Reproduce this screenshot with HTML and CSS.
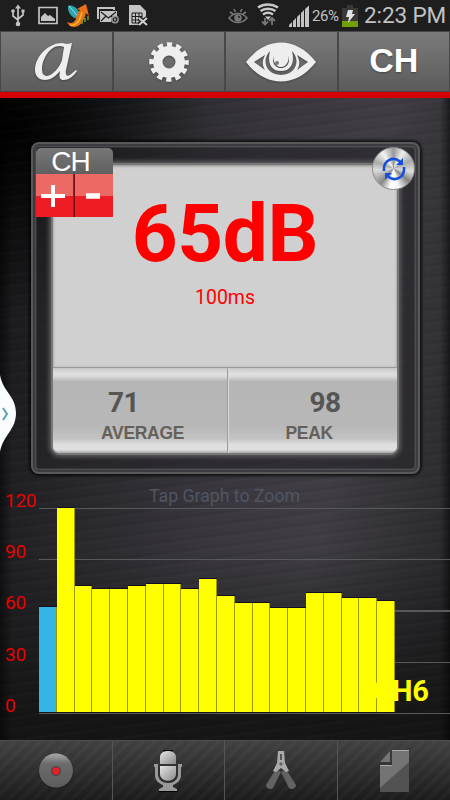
FILE: index.html
```html
<!DOCTYPE html>
<html lang="en">
<head>
    <meta charset="UTF-8">
    <meta name="viewport" content="width=device-width, initial-scale=1.0">
    <title>Sound Meter</title>
    <link rel="stylesheet" href="styles.css">
</head>
<body>
<div class="screen">
    <header class="status">
        <svg class="status-icons" width="152" height="31" viewBox="0 0 152 31">
            <g fill="none" stroke="#c4c4c4" stroke-width="1.7">
                <path d="M18 7v17M13 12v4l5 4M23 12v3l-5 4"/>
                <path d="M39 7.5h18v16H39z"/>
            </g>
            <g fill="#c4c4c4">
                <path d="M18 4.5l3 4h-6z"/><circle cx="18" cy="24" r="2.3"/><circle cx="13" cy="11" r="1.8"/><path d="M21.500 9.500h3v3h-3z"/>
                <path d="M41 21v-4l4-4 3 3 2-1 5 4v2z"/>
                <path d="M97 7h18v3h-2V9H99v10h-2z"/>
                <path d="M100 11h17v6a5 5 0 0 0-6 5h-11z"/>
                <path d="M129 5h11l6 6v6l-4 2v6h-13z"/>
            </g>
            <path d="M101 12l7.500 6 7.500-6M101 21l5-5M111 16l2 2" fill="none" stroke="#1e1e1e" stroke-width="1.200"/>
            <circle cx="115" cy="19.500" r="3.200" fill="none" stroke="#999" stroke-width="1.400"/><circle cx="115" cy="19.500" r="1.200" fill="#999"/>
            <path d="M132 13h10v10h-10zM132 16.500h10M132 20h10M135.500 13v10M139 13v10" fill="none" stroke="#1e1e1e"/>
            <path d="M139 18l8 7M147 18l-8 7" stroke="#1e1e1e" stroke-width="4"/>
            <path d="M139 18l8 7M147 18l-8 7" stroke="#d0d0d0" stroke-width="2"/>
            <path d="M68 6c5-2 12 3 13 13-8 1-14-6-13-13z" fill="#2aa5ae"/>
            <path d="M69 6l11 13" stroke="#9fe0df"/>
            <path d="M67 22c4 2 7 1 9-3 0-4 2-7 4-9l-3-1 9-5 3 12-3-3c-2 8-6 14-12 14-3 0-6-2-7-5z" fill="#e7711b"/>
            <path d="M70 25c6 1 10-4 12-13" fill="none" stroke="#f6b331" stroke-width="1.500"/>
            <path d="M82 20v4M85 18v4M88 16v4" stroke="#6e9a28" stroke-width="1.500"/>
        </svg>
        <div class="status-right">
            <svg width="86" height="31" viewBox="0 0 86 31">
                <g fill="none" stroke="#777" stroke-width="1.600">
                    <path d="M1 18c5-6 13-6 18 0-5 6-13 6-18 0zM2 12l3 2M6 9l1.500 3M14 9l-1.500 3M18 12l-3 2"/>
                </g>
                <circle cx="10" cy="18" r="3.700" fill="#777"/><circle cx="11" cy="17" r="1" fill="#1e1e1e"/>
                <g fill="none" stroke="#c8c8c8" stroke-width="2.500">
                    <path d="M30 7.500c6-4 14-4 20 0M32.500 11c4-3 11-3 15 0M35 14.500c3-2 7-2 10 0"/>
                </g>
                <path d="M37 16.500h6L40 20z" fill="#c8c8c8"/>
                <path d="M37 18v6M34 21.500l3 3 3-3M44 25v-6M41 21l3-3 3 3" fill="none" stroke="#777" stroke-width="1.800"/>
                <path d="M61 27v-2l3-3v5zM65 27v-6l3-3v9zM69 27V17l3-3v13zM73 27V13l3-3v17zM77 27V9l4-3.500V27z" fill="#c4c4c4"/>
            </svg>
            <span class="percent">26%</span>
            <svg width="16" height="31" viewBox="0 0 16 31">
                <path d="M5 5h6v3h5v19H0V8h5z" fill="#383838"/>
                <path d="M0 21h16v6H0z" fill="#72a000"/>
                <path d="M6 10h5l-1 4h3l-7 9 1-6H4z" fill="#e2e2e2"/>
            </svg>
            <span class="clock">2:23 PM</span>
        </div>
    </header>

    <nav class="toolbar">
        <div class="tool">
            <svg width="44" height="40" viewBox="0 0 44 40">
                <path fill-rule="evenodd" d="M38 1L32 28c-1 5 1 7 4 5l6-5 1 1c-4 6-9 9-13 9-5 0-5-4-4-9-5 6-10 9-15 9-6 0-10-4-10-10C1 14 15 1 28 1l5 1zM30 5C18 0 8 16 8 27c0 5 2 7 5 7 5 0 13-9 15-16z"/>
            </svg>
        </div>
        <div class="tool">
            <svg width="40" height="40" viewBox="-20 -20 40 40">
                <circle r="11.200" fill="none" stroke="#eee" stroke-width="9.400"/>
                <circle r="17.300" fill="none" stroke="#eee" stroke-width="5" stroke-dasharray="5.200 3.858" stroke-dashoffset="2.600"/>
            </svg>
        </div>
        <div class="tool">
            <svg width="70" height="40" viewBox="0 0 70 40">
                <path fill-rule="evenodd" d="M0 20C20-6 50-6 70 20 50 46 20 46 0 20zM8 20l11 8c-3-5-3-9 0-15zM62 20l-11 8c3-5 3-9 0-15zM24 9c-9 9-4 24 11 24S55 18 46 9c3 12-1 20-11 20S21 21 24 9zM30 11c-6 7-2 15 5 15s11-8 5-15c2 3 1 6-1 7-3 3-9-1-9-7z"/>
                <path d="M29 9c4-5 8-5 12 0 4 8 0 16-6 16s-10-8-6-16z"/>
                <circle cx="31" cy="21" r="2" fill="#777"/>
            </svg>
        </div>
        <div class="tool tool-text">CH</div>
    </nav>

    <main class="panel">
        <section class="meter">
            <div class="display">
                <div class="reading">
                    <div class="level">65dB</div>
                    <div class="interval">100ms</div>
                </div>
                <div class="stats">
                    <div class="stat average">
                        <div class="stat-value">71</div>
                        <div class="stat-label">AVERAGE</div>
                    </div>
                    <div class="stat peak">
                        <div class="stat-value">98</div>
                        <div class="stat-label">PEAK</div>
                    </div>
                </div>
            </div>
            <div class="channel">
                <div class="channel-title">CH</div>
                <div class="channel-buttons">
                    <div class="step"><svg width="24" height="24"><path d="M12 1v22M0 12h24" stroke="#fff" stroke-width="4"/></svg></div>
                    <div class="step"><svg width="14" height="24"><path d="M0 12h14" stroke="#fff" stroke-width="5.500"/></svg></div>
                </div>
            </div>
            <div class="refresh">
                <svg width="24" height="24" viewBox="0 0 24 24">
                    <g fill="none" stroke="#1450dc" stroke-width="2.600">
                        <path d="M2 14C1 3 11-1 18 4.500M22 10c1 11-9 15-16 9.500"/>
                    </g>
                    <path d="M21 1v7h-7zM3 23v-7h7z" fill="#1450dc"/>
                </svg>
            </div>
        </section>

        <svg class="drawer" width="17" height="84" viewBox="0 0 17 84">
            <path d="M0 3C3 20 16 24 16 41S3 63 0 80z" fill="#fafdfd"/>
            <path d="M3 36l4 6-4 6" fill="none" stroke="#5b9fba" stroke-width="2"/>
        </svg>

        <p class="hint">Tap Graph to Zoom</p>
        <section class="chart">
            <div class="axis">
                <span>120</span><span>90</span><span>60</span><span>30</span><span>0</span>
            </div>
            <div class="plot">
                <div class="bar current" style="height: 105.500px"></div>
                <div class="bar" style="height: 204.500px"></div>
                <div class="bar" style="height: 126px"></div>
                <div class="bar" style="height: 123px"></div>
                <div class="bar" style="height: 123px"></div>
                <div class="bar" style="height: 126px"></div>
                <div class="bar" style="height: 128px"></div>
                <div class="bar" style="height: 128px"></div>
                <div class="bar" style="height: 123px"></div>
                <div class="bar" style="height: 133px"></div>
                <div class="bar" style="height: 116px"></div>
                <div class="bar" style="height: 109.500px"></div>
                <div class="bar" style="height: 109.500px"></div>
                <div class="bar" style="height: 104.500px"></div>
                <div class="bar" style="height: 104.500px"></div>
                <div class="bar" style="height: 119.500px"></div>
                <div class="bar" style="height: 119.500px"></div>
                <div class="bar" style="height: 114.500px"></div>
                <div class="bar" style="height: 114.500px"></div>
                <div class="bar" style="height: 111px"></div>
                <span class="series">CH6</span>
            </div>
        </section>
    </main>

    <footer class="tabs">
        <div class="tab">
            <svg width="38" height="42" viewBox="0 0 38 42">
                <defs>
                    <linearGradient id="metal" x2="0" y2="1"><stop stop-color="#aaa"/><stop offset=".3" stop-color="#6b6b6b"/><stop offset="1" stop-color="#5d5d5d"/></linearGradient>
                    <linearGradient id="silver" x2="1" y2="1"><stop stop-color="#e6e6e6"/><stop offset="1" stop-color="#888"/></linearGradient>
                </defs>
                <circle cx="19" cy="21.500" r="17.500" fill="#202020"/>
                <circle cx="19" cy="20.500" r="17" fill="url(#metal)"/>
                <circle cx="19" cy="21" r="5" fill="#444"/><circle cx="19" cy="21" r="3.800" fill="#e32028"/>
            </svg>
        </div>
        <div class="tab">
            <svg width="30" height="42" viewBox="0 0 30 42">
                <path d="M7 14V7c0-8 16-8 16 0v7z" fill="url(#silver)"/>
                <path d="M7 16h16v8c0 9-16 9-16 0z" fill="url(#silver)"/>
                <path d="M1 14h4v10c0 12 20 12 20 0V14h4v3h-1v8c0 5-3 8-8 10v2l4 2v2H6v-2l4-2v-2c-5-2-8-5-8-10v-8H1z" fill="#999"/>
                <path d="M6 41.500h18M10 .5h10" fill="none" stroke="#050505"/>
            </svg>
        </div>
        <div class="tab">
            <svg width="34" height="42" viewBox="0 0 34 42">
                <path d="M12 19l5 3-8 16c-2 2-7 1-7-3zM22 19l-5 3 8 16c2 2 7 1 7-3z" fill="#626262"/>
                <path d="M14 1h6l1 12 4 8-3 1-5-4-5 4-3-1 4-8z" fill="#aaa"/>
                <path d="M17 4v6" stroke="#555" stroke-width="2"/><circle cx="17" cy="14" r="1.700" fill="#666"/>
            </svg>
        </div>
        <div class="tab">
            <svg width="30" height="42" viewBox="0 0 30 42">
                <path d="M13 0h17v42H1V15h12z" fill="#525252"/>
                <path d="M13 0h17v12L1 38V15h12z" fill="#747474"/>
                <path d="M11 1v11H1z" fill="#747474"/>
                <path d="M13 .5h17M1 15.500h12" stroke="#aaa"/>
            </svg>
        </div>
    </footer>
</div>
</body>
</html>
```
FILE: styles.css
```css
* {
    box-sizing: border-box;
}

body {
    margin: 0;
    font-family: Roboto, sans-serif;
    background: #000;
}

svg {
    display: block;
}

.screen {
    width: 450px;
    height: 800px;
    display: flex;
    flex-direction: column;
    overflow: hidden;
}

.status {
    height: 31px;
    display: flex;
    justify-content: space-between;
    background: #1e1e1e;
    color: #c2c2c2;
}

.status-right {
    display: flex;
    width: 222px;
}

.percent {
    width: 29px;
    margin-right: 1px;
    margin-left: -2px;
    font-size: 15px;
    line-height: 32px;
    letter-spacing: -0.4px;
}

.clock {
    margin-left: 6px;
    font-size: 22.5px;
    line-height: 31px;
    letter-spacing: -0.1px;
    white-space: nowrap;
}

.toolbar {
    height: 61px;
    display: grid;
    grid-template-columns: repeat(4, 1fr);
    background: #484848;
}

.tool {
    display: flex;
    align-items: center;
    justify-content: center;
    margin: 1px;
    background: linear-gradient(#7b7b7b, #5b5b5b);
}

.tool svg {
    fill: #eee;
    filter: drop-shadow(0 1px 1px #444);
}

.tool-text {
    color: #fff;
    font: bold 34px "Liberation Sans", sans-serif;
    text-shadow: 0 1px 2px #444;
    padding-bottom: 2px;
}

.panel {
    position: relative;
    height: 648px;
    padding: 44px 0 0 31px;
    border-top: 6px solid #d50000;
    background:
        linear-gradient(to right, rgba(0, 0, 0, 0.5), transparent 12px, transparent 440px, rgba(0, 0, 0, 0.5)),
        repeating-linear-gradient(173deg, rgba(255, 255, 255, 0.012) 0 2px, transparent 3px 7px, rgba(0, 0, 0, 0.07) 9px, transparent 11px),
        linear-gradient(to bottom, transparent 70%, rgba(20, 20, 20, 0.95) 97%),
        radial-gradient(ellipse 210px 190px at 0 30px, #000, transparent),
        linear-gradient(100deg, #151517 0%, #242327 20%, #39373d 50%, #403e44 70%, #252427 100%);
}

.meter {
    position: relative;
    width: 389px;
    height: 332px;
    padding: 19px 19px 17px 18px;
    border: 2px solid #59595b;
    border-radius: 8px;
    background: rgba(38, 36, 42, 0.6);
    box-shadow: inset 0 0 0 2px #3c3b3f, inset 0 0 2px 3px #5d5c5f, 0 0 3px 2px rgba(0, 0, 0, 0.7);
}

.display {
    height: 292px;
    border: 2px solid #777;
    border-radius: 4px 4px 9px 9px;
    background: #d0d0d0;
    overflow: hidden;
    box-shadow: 0 0 4px 2px #5c5b5e;
}

.reading {
    height: 202px;
    color: #f00;
    text-align: center;
    box-shadow: inset 0 1px 3px #888;
}

.level {
    padding-top: 22px;
    font-size: 80px;
    font-weight: bold;
    line-height: 94px;
    letter-spacing: -0.4px;
}

.interval {
    padding-top: 5px;
    font-size: 19.5px;
    line-height: 24px;
}

.stats {
    height: 86px;
    display: flex;
    border-top: 1px solid #999;
    background: linear-gradient(#c8c8c8, #e0e0e0 7%, #d8d8d8 10%, #b5b5b5 16%, #b8b8b8 70%, #c3c3c3 83%, #dedede 90%, #e0e0e0 96%, #aaa);
}

.stat {
    padding-top: 19px;
}

.average {
    padding-left: 55px;
    width: 176px;
    border-right: 1px solid #999;
}

.peak {
    padding-left: 56px;
    width: 169px;
    border-left: 1px solid #ddd;
}

.stat-value {
    width: 32px;
    color: #555;
    font-size: 28px;
    font-weight: bold;
    line-height: 31px;
    letter-spacing: -0.6px;
}

.peak .stat-value {
    margin-left: 24px;
}

.stat-label {
    margin-left: -7px;
    padding-top: 4px;
    color: #65615a;
    font: bold 17.5px/22px "Liberation Sans", sans-serif;
    letter-spacing: -0.3px;
}

.peak .stat-label {
    margin-left: 0;
}

.channel {
    position: absolute;
    left: 3px;
    top: 4px;
    width: 77px;
    height: 69px;
    border-radius: 5px 5px 0 0;
    background: linear-gradient(#777, #606060 26px);
}

.channel-title {
    height: 26px;
    padding-right: 8px;
    color: #fff;
    font: 28px/27px "Liberation Sans", sans-serif;
    letter-spacing: -1px;
    text-align: center;
}

.channel-buttons {
    display: grid;
    grid-template-columns: 38px 38px;
    gap: 1px;
    height: 43px;
    background: #751418;
}

.step {
    display: flex;
    align-items: center;
    justify-content: center;
    background: linear-gradient(#ed6a64 22px, #ee1c25 22px);
}

.step:first-child {
    padding-right: 4px;
    border-right: 1px solid #8e2023;
}

.step:last-child {
    padding-right: 2px;
}

.refresh {
    position: absolute;
    right: 3px;
    top: 3px;
    width: 43px;
    height: 43px;
    display: flex;
    align-items: center;
    justify-content: center;
    border: 1px solid #8c8c8c;
    border-radius: 50%;
    background: conic-gradient(#999, #eee 30deg, #aaa 65deg, #ddd 100deg, #858585 130deg, #f5f5f5 165deg, #fff 190deg, #888 220deg, #ddd 265deg, #aaa 290deg, #f4f4f4 325deg, #999);
}

.drawer {
    position: absolute;
    left: 0;
    top: 274px;
}

.hint {
    height: 24px;
    margin: 10px 31px 0 0;
    padding-right: 1px;
    color: #505563;
    font-size: 17.7px;
    line-height: 25px;
    text-align: center;
}

.chart {
    display: flex;
    height: 206px;
    margin-left: -31px;
}

.axis {
    width: 39px;
    margin-top: -19px;
    padding-left: 5px;
    display: flex;
    flex-direction: column;
    color: #e80000;
    font-size: 19px;
}

.axis span {
    height: 51.2px;
    flex: none;
    line-height: 24px;
    letter-spacing: -0.3px;
}

.plot {
    position: relative;
    width: 411px;
    height: 206px;
    display: flex;
    align-items: flex-end;
    padding-bottom: 1px;
    background: repeating-linear-gradient(#565859 0 1.2px, transparent 1.2px 51.2px);
    border-bottom: 1px solid #565859;
}

.bar {
    flex: none;
    width: 17.8px;
    background: #ff0;
    border-right: 1px solid #999a00;
    box-shadow: 0 -1px 0 #101025;
}

.bar.current {
    background: #33b5e5;
}

.series {
    position: absolute;
    right: 21px;
    bottom: 4px;
    color: #ff0;
    font-size: 29px;
    font-weight: bold;
    line-height: 36px;
}

.tabs {
    height: 60px;
    display: grid;
    grid-template-columns: repeat(4, 1fr);
    border-top: 1px solid #4d4d4d;
    background:
        repeating-linear-gradient(135deg, rgba(255, 255, 255, 0.025) 0 4px, transparent 4px 9px),
        linear-gradient(#414141, #1c1c1c);
}

.tab {
    display: flex;
    align-items: center;
    justify-content: center;
    border-right: 1px solid #555;
}

.tab:last-child {
    border-right: 0;
}
```
